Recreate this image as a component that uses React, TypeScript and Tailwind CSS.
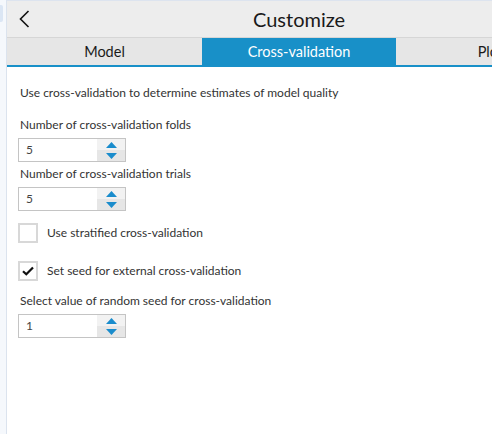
import React from 'react';

function SpinBox({ value }: { value: string }) {
  return (
    <div className="flex h-[24px] w-[108px] border border-[#c4c4c4] bg-white">
      <div className="flex flex-1 items-center pl-[7px] text-[12px] text-[#444]">{value}</div>
      <div className="flex w-[28px] flex-col">
        <div className="flex flex-1 items-center justify-center bg-[#f2f2f2]">
          <svg width="11" height="6" viewBox="0 0 11 6">
            <path d="M0 6 L5.5 0 L11 6 Z" fill="#1a8ccc" />
          </svg>
        </div>
        <div className="flex flex-1 items-center justify-center bg-[#e6e6e6]">
          <svg width="11" height="6" viewBox="0 0 11 6">
            <path d="M0 0 L5.5 6 L11 0 Z" fill="#1a8ccc" />
          </svg>
        </div>
      </div>
    </div>
  );
}

function CheckRow({ label, checked }: { label: string; checked?: boolean }) {
  return (
    <div className="flex items-center">
      <div className="ml-[-1px] flex h-[20px] w-[20px] items-center justify-center border-2 border-[#d8d8d8] bg-white">
        {checked && (
          <svg width="12" height="10" viewBox="0 0 12 10">
            <path d="M1 5.2 L4.3 8.3 L11 1.5" fill="none" stroke="#111" strokeWidth="2.2" />
          </svg>
        )}
      </div>
      <span className="ml-[9px] text-[12px] text-[#333]">{label}</span>
    </div>
  );
}

export default function App() {
  return (
    <div
      className="flex h-[434px] w-[492px] overflow-hidden bg-white"
      style={{ fontFamily: 'Lato, "Noto Sans", sans-serif' }}
    >
      {/* side strip */}
      <div className="relative w-[7px] shrink-0 border-r border-[#dbe3ee] bg-[#f5f8fc]">
        <div className="mt-[5px] h-[17px] w-[3px] rounded-r-[2px] bg-[#dbe6f4]"></div>
      </div>

      <div className="flex min-w-0 flex-1 flex-col border-t border-[#dde4ef]">
        {/* Header */}
        <div className="flex h-[37px] shrink-0 items-center border-b border-[#d6d6d6] bg-[#ededed]">
          <svg className="ml-[12px]" width="11" height="18" viewBox="0 0 11 18">
            <path d="M9.5 1 L1.5 9 L9.5 17" fill="none" stroke="#111" strokeWidth="1.6" />
          </svg>
          <span className="ml-[223px] text-[20px] leading-none text-[#1a1a1a]">Customize</span>
        </div>

        {/* Tabs */}
        <div className="flex h-[29px] shrink-0 border-b-2 border-[#1890c8] bg-[#e6e6e6] text-[14.5px]">
          <div className="flex w-[195px] shrink-0 items-center justify-center text-[#1a1a1a]">Model</div>
          <div className="flex w-[194px] shrink-0 items-center justify-center bg-[#1890c8] text-white">
            Cross-validation
          </div>
          <div className="flex w-[195px] shrink-0 items-center justify-center text-[#1a1a1a]">Plots</div>
        </div>

        {/* Content */}
        <div className="flex flex-col pl-[12px] pt-[18px] text-[12px] leading-[16px] text-[#333]">
          <p className="pl-[1px]">Use cross-validation to determine estimates of model quality</p>

          <p className="mt-[16px] pl-[1px]">Number of cross-validation folds</p>
          <div className="mt-[5px] ml-[-1px]">
            <SpinBox value="5" />
          </div>

          <p className="mt-[4px] pl-[1px]">Number of cross-validation trials</p>
          <div className="mt-[5px] ml-[-1px]">
            <SpinBox value="5" />
          </div>

          <div className="mt-[12px]">
            <CheckRow label="Use stratified cross-validation" />
          </div>
          <div className="mt-[18px]">
            <CheckRow label="Set seed for external cross-validation" checked />
          </div>

          <p className="mt-[12px] pl-[1px]">Select value of random seed for cross-validation</p>
          <div className="mt-[5px] ml-[-1px]">
            <SpinBox value="1" />
          </div>
        </div>
      </div>
    </div>
  );
}
